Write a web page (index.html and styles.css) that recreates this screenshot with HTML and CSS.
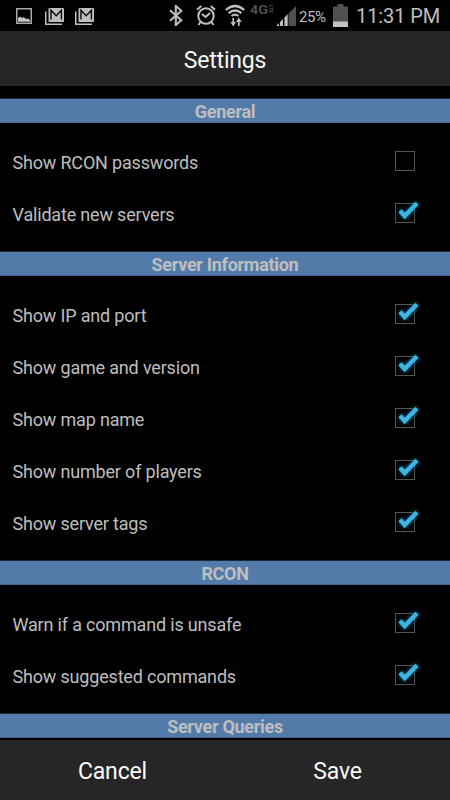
FILE: index.html
```html
<!DOCTYPE html>
<html lang="en">
<head>
<meta charset="utf-8">
<title>Settings</title>
<link rel="stylesheet" href="styles.css">
</head>
<body>
<svg class="defs" width="0" height="0" aria-hidden="true">
  <symbol id="mail" viewBox="0 0 20 18">
    <path d="M.75 3.5v12.7H17" fill="none" stroke="#bebebe" stroke-width="1.5"/>
    <rect x="3.5" y="0" width="15.5" height="14" rx="1" fill="#bebebe"/>
    <path d="M6 11.6V2.3l5.2 5.4 5.2-5.4v9.3" fill="none" stroke="#080808" stroke-width="1.4"/>
  </symbol>
  <symbol id="check" viewBox="0 0 32 28">
    <path d="M7 13.8l4.7 5.2L24 6.3" fill="none" stroke="#3cb4e4" stroke-width="4.3"/>
  </symbol>
</svg>
<div class="screen">
  <header class="status">
    <svg class="picture" width="16" height="16" viewBox="0 0 16 16"><path d="M.75.75h14.5v14.5H.75z" fill="none" stroke="#aaa" stroke-width="1.5"/><path d="M2 13.7V10l2-1.6 2 1.5 1.5-1 2.5 2 2-.4 2 1.5v1.7z" fill="#c4c4c4"/></svg>
    <svg class="mail" width="20" height="18"><use href="#mail"/></svg>
    <svg class="mail" width="20" height="18"><use href="#mail"/></svg>
    <svg class="bluetooth" width="14" height="21" viewBox="0 0 14 21"><path d="M1 5.2l11.3 10L6.8 20V1l5.5 4.8L1 15.8" fill="none" stroke="#bebebe" stroke-width="2.1"/></svg>
    <svg class="alarm" width="20" height="21" viewBox="0 0 20 21" fill="none" stroke="#bebebe" stroke-width="2"><circle cx="10" cy="11" r="7.7"/><path d="M1 4.7L5.2 1M19 4.7L14.8 1M4.5 17l-2 3M15.5 17l2 3M6 9l3.6 3L14 8"/></svg>
    <svg class="wifi" width="20" height="23" viewBox="0 0 20 23" fill="none" stroke="#bebebe" stroke-width="2.2"><path d="M.8 6Q10-2 19.2 6M3.6 9.2q6.4-5.4 12.8 0M6.5 12q3.5-2.8 7 0"/><path d="M8.2 14v7M13.8 22v-7" stroke-width="1.7"/><path d="M5.4 18h5.6l-2.8 4.5zM10.9 18h5.8l-2.9-4.4z" fill="#bebebe" stroke="none"/></svg>
    <span class="network"><span class="gen">4G</span><span class="lte">LTE</span></span>
    <svg class="signal" width="20" height="20" viewBox="0 0 20 20"><path d="M12.5 7.5L20 0v20h-7.5z" fill="#505050"/><path d="M0 20l3-3v3zM4 16l3-3v7H4zM8.4 11.6l3.3-3.3V20H8.4z" fill="#bebebe"/></svg>
    <span class="percent">25%</span>
    <svg class="battery" width="15" height="23" viewBox="0 0 15 23"><path d="M4.5 0h6v2.5H15V23H0V2.5h4.5z" fill="#505050"/><path d="M0 17.5h15V23H0z" fill="#c4c4c4"/></svg>
    <time class="clock">11:31 PM</time>
  </header>
  <h1 class="title">Settings</h1>
  <main class="list">
    <section>
      <h2>General</h2>
      <div class="rows">
        <div class="row"><span>Show RCON passwords</span><i class="box"></i></div>
        <div class="row"><span>Validate new servers</span><i class="box"><svg class="check"><use href="#check"/></svg></i></div>
      </div>
    </section>
    <section>
      <h2>Server Information</h2>
      <div class="rows">
        <div class="row"><span>Show IP and port</span><i class="box"><svg class="check"><use href="#check"/></svg></i></div>
        <div class="row"><span>Show game and version</span><i class="box"><svg class="check"><use href="#check"/></svg></i></div>
        <div class="row"><span>Show map name</span><i class="box"><svg class="check"><use href="#check"/></svg></i></div>
        <div class="row"><span>Show number of players</span><i class="box"><svg class="check"><use href="#check"/></svg></i></div>
        <div class="row"><span>Show server tags</span><i class="box"><svg class="check"><use href="#check"/></svg></i></div>
      </div>
    </section>
    <section>
      <h2>RCON</h2>
      <div class="rows">
        <div class="row"><span>Warn if a command is unsafe</span><i class="box"><svg class="check"><use href="#check"/></svg></i></div>
        <div class="row"><span>Show suggested commands</span><i class="box"><svg class="check"><use href="#check"/></svg></i></div>
      </div>
    </section>
    <section><h2>Server Queries</h2></section>
  </main>
  <footer class="actions"><button>Cancel</button><button>Save</button></footer>
</div>
</body>
</html>
```
FILE: styles.css
```css
* { box-sizing: border-box; }
body { margin: 0; background: #000; font-family: Roboto, sans-serif; }
.defs { display: none; }
.screen { display: flex; flex-direction: column; width: 450px; height: 800px; overflow: hidden; background: #000; }
.status { flex: none; display: flex; align-items: flex-start; height: 31px; padding-left: 16px; color: #bebebe; white-space: nowrap; }
.status > * { flex: none; }
.picture { margin-top: 8px; }
.mail { margin: 8px 0 0 13px; }
.mail + .mail { margin-left: 10px; }
.bluetooth { margin: 5px 0 0 74px; }
.alarm { margin: 5px 0 0 13px; }
.wifi { margin: 4px 0 0 9px; }
.network { display: flex; width: 26px; margin: 2px 0 0 5px; color: #505050; font: 700 13px/16px Roboto, sans-serif; }
.gen { width: 18px; transform: scaleX(1.12); transform-origin: left; }
.lte { width: 5px; margin-top: 3px; font-size: 5px; line-height: 5px; writing-mode: vertical-rl; }
.signal { margin: 6px 0 0; }
.percent { width: 29px; margin: 8px 0 0 3px; font-size: 15px; line-height: 18px; letter-spacing: -.45px; }
.battery { margin: 4px 0 0 5px; }
.clock { margin: 4px 0 0 8px; font-size: 20px; line-height: 24px; letter-spacing: -.1px; }
.title { flex: none; height: 55px; margin: 0; padding-top: 1px; background: #262626; color: #f5f5f5; text-align: center; font-size: 23px; font-weight: 400; line-height: 58px; letter-spacing: -.2px; }
.list { flex: 1; min-height: 0; padding-top: 13px; overflow: hidden; }
h2 { height: 24px; margin: 0; background: #527baa; box-shadow: inset 0 -1px #45678f, 0 -1px #1a2838; color: #bebebe; text-align: center; font-size: 18px; font-weight: 700; line-height: 25px; letter-spacing: -.3px; }
.rows { padding: 13px 0 12px; }
.row { display: flex; align-items: center; justify-content: space-between; height: 52px; padding: 2px 35px 0 12.5px; color: #bebebe; font-size: 18px; line-height: 24px; letter-spacing: -.18px; }
.box { position: relative; width: 20px; height: 20px; margin-top: -5px; border: 1px solid #545454; }
.check { position: absolute; left: -3px; top: -7px; width: 32px; height: 28px; filter: drop-shadow(0 0 2px #087ba8); }
.actions { flex: none; display: grid; grid-template-columns: 1fr 1fr; height: 60px; background: #262626; }
button { border: 0; padding: 3px 0 0; background: none; color: #fafafa; font: 23px Roboto, sans-serif; letter-spacing: -.15px; }
```
